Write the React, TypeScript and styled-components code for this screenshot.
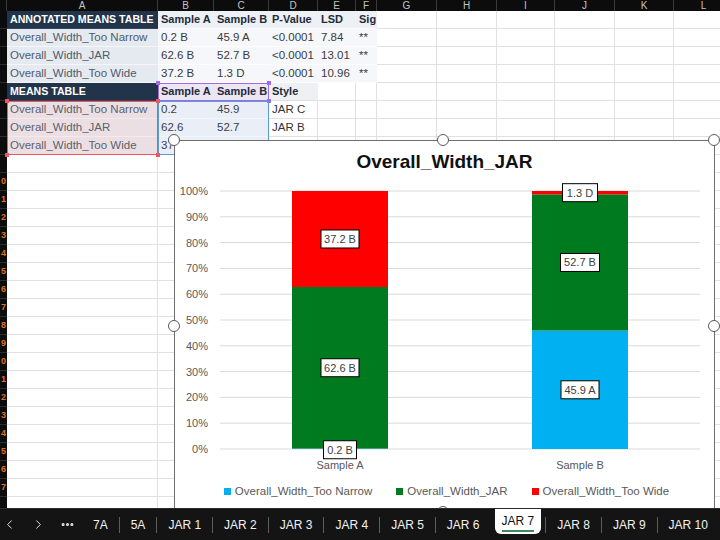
import React from 'react';
import styled, { createGlobalStyle } from 'styled-components';
import { ChevronLeft, ChevronRight, Ellipsis } from 'lucide-react';

type Kind =
  | 'plain'
  | 'title'
  | 'head'
  | 'label'
  | 'data'
  | 'pink'
  | 'purple'
  | 'blue'
  | 'gray';

type CellSpec = { t?: string; k?: Kind };

const COLS = [7, 151, 56, 55, 49, 38, 21, 60, 60, 58, 60, 59, 60];
const LETTERS = ['', 'A', 'B', 'C', 'D', 'E', 'F', 'G', 'H', 'I', 'J', 'K', 'L'];

const TOP_ROWS: CellSpec[][] = [
  [
    { t: 'ANNOTATED MEANS TABLE', k: 'title' },
    { t: 'Sample A', k: 'head' },
    { t: 'Sample B', k: 'head' },
    { t: 'P-Value', k: 'head' },
    { t: 'LSD', k: 'head' },
    { t: 'Sig', k: 'head' },
  ],
  [
    { t: 'Overall_Width_Too Narrow', k: 'label' },
    { t: '0.2 B', k: 'data' },
    { t: '45.9 A', k: 'data' },
    { t: '<0.0001', k: 'data' },
    { t: '7.84', k: 'data' },
    { t: '**', k: 'data' },
  ],
  [
    { t: 'Overall_Width_JAR', k: 'label' },
    { t: '62.6 B', k: 'data' },
    { t: '52.7 B', k: 'data' },
    { t: '<0.0001', k: 'data' },
    { t: '13.01', k: 'data' },
    { t: '**', k: 'data' },
  ],
  [
    { t: 'Overall_Width_Too Wide', k: 'label' },
    { t: '37.2 B', k: 'data' },
    { t: '1.3 D', k: 'data' },
    { t: '<0.0001', k: 'data' },
    { t: '10.96', k: 'data' },
    { t: '**', k: 'data' },
  ],
  [
    { t: 'MEANS TABLE', k: 'title' },
    { t: 'Sample A', k: 'purple' },
    { t: 'Sample B', k: 'purple' },
    { t: 'Style', k: 'gray' },
  ],
  [
    { t: 'Overall_Width_Too Narrow', k: 'pink' },
    { t: '0.2', k: 'blue' },
    { t: '45.9', k: 'blue' },
    { t: 'JAR C' },
  ],
  [
    { t: 'Overall_Width_JAR', k: 'pink' },
    { t: '62.6', k: 'blue' },
    { t: '52.7', k: 'blue' },
    { t: 'JAR B' },
  ],
  [
    { t: 'Overall_Width_Too Wide', k: 'pink' },
    { t: '37.2', k: 'blue' },
    { t: '', k: 'blue' },
    { t: '' },
  ],
];

const TOTAL_ROWS = 28;

const TABS = ['7A', '5A', 'JAR 1', 'JAR 2', 'JAR 3', 'JAR 4', 'JAR 5', 'JAR 6', 'JAR 7', 'JAR 8', 'JAR 9', 'JAR 10'];

// chart data, in percent
const SCALE = 2.58;
const ZERO_Y = 268;
const bars = [
  {
    name: 'Sample A',
    x: 117,
    segs: [
      { v: 0.2, color: '#00b0f0', label: '0.2 B', w: 33 },
      { v: 62.6, color: '#007a1e', label: '62.6 B', w: 38 },
      { v: 37.2, color: '#ff0000', label: '37.2 B', w: 38 },
    ],
  },
  {
    name: 'Sample B',
    x: 357,
    segs: [
      { v: 45.9, color: '#00b0f0', label: '45.9 A', w: 38 },
      { v: 52.8, color: '#007a1e', label: '52.7 B', w: 39 },
      { v: 1.3, color: '#ff0000', label: '1.3 D', w: 35 },
    ],
  },
];

const GlobalStyle = createGlobalStyle`
  body {
    margin: 0;
    background: #fff;
    font-family: "Liberation Sans", Arial, sans-serif;
  }
`;

const colTemplate = COLS.map((c) => `${c}px`).join(' ');

const App = () => {
  const rows: CellSpec[][] = [];
  for (let i = 0; i < TOTAL_ROWS; i++) {
    const base = TOP_ROWS[i] || [];
    const filled: CellSpec[] = [];
    for (let c = 0; c < COLS.length - 1; c++) filled.push(base[c] || {});
    rows.push(filled);
  }

  return (
    <Page>
      <GlobalStyle />
      <Sheet>
        <HeaderRow>
          {LETTERS.map((l, i) => (
            <ColHead key={i}>{l}</ColHead>
          ))}
        </HeaderRow>
        {rows.map((r, i) => (
          <Row key={i}>
            <RowHead>
              <RowNum>{i + 1 >= 10 && i + 1 < TOTAL_ROWS ? (i + 1) % 10 : ''}</RowNum>
            </RowHead>
            {r.map((cell, c) => (
              <Cell key={c} $kind={cell.k || 'plain'}>
                {cell.t}
              </Cell>
            ))}
          </Row>
        ))}

        <Selection $color="#a36be0" style={{ left: 158, top: 83, width: 111, height: 18 }}>
          <Knob $color="#a36be0" $pos="tl" />
          <Knob $color="#a36be0" $pos="tr" />
          <Knob $color="#a36be0" $pos="bl" />
          <Knob $color="#a36be0" $pos="br" />
        </Selection>
        <Selection $color="#5b9bd5" style={{ left: 158, top: 101, width: 111, height: 54 }} />
        <Selection $color="#f2545f" style={{ left: 7, top: 101, width: 151, height: 54 }}>
          <Knob $color="#f2545f" $pos="tl" />
          <Knob $color="#f2545f" $pos="tr" />
          <Knob $color="#f2545f" $pos="bl" />
          <Knob $color="#f2545f" $pos="br" />
        </Selection>

        <ChartBox>
          <ChartTitle>Overall_Width_JAR</ChartTitle>
          <svg width={538} height={298} viewBox="0 0 538 298">
            {Array.from({ length: 11 }).map((_, i) => {
              const y = ZERO_Y - i * 10 * SCALE;
              return (
                <g key={i}>
                  <line x1={45} x2={525} y1={y} y2={y} stroke="#d9d9d9" strokeWidth={1} />
                  <text
                    x={33}
                    y={y + 4}
                    textAnchor="end"
                    fontSize={11}
                    fill="#595959"
                    fontFamily="Liberation Sans, Arial, sans-serif"
                  >
                    {i * 10}%
                  </text>
                </g>
              );
            })}
            {bars.map((b) => {
              let acc = 0;
              return (
                <g key={b.name}>
                  {b.segs.map((s) => {
                    const y1 = ZERO_Y - (acc + s.v) * SCALE;
                    const h = s.v * SCALE;
                    acc += s.v;
                    return <rect key={s.label} x={b.x} y={y1} width={96} height={h} fill={s.color} />;
                  })}
                  <text
                    x={b.x + 48}
                    y={288}
                    textAnchor="middle"
                    fontSize={11}
                    fill="#595959"
                    fontFamily="Liberation Sans, Arial, sans-serif"
                  >
                    {b.name}
                  </text>
                </g>
              );
            })}
            {bars.map((b) => {
              let acc = 0;
              return b.segs.map((s) => {
                const cy = ZERO_Y - (acc + s.v / 2) * SCALE + (s.v < 1 ? 1 : 0);
                acc += s.v;
                return (
                  <g key={b.name + s.label}>
                    <rect x={b.x + 48 - s.w / 2} y={cy - 9} width={s.w} height={18} fill="#fff" stroke="#000" strokeWidth={1} />
                    <text
                      x={b.x + 48}
                      y={cy + 4}
                      textAnchor="middle"
                      fontSize={11}
                      fill="#404040"
                      fontFamily="Liberation Sans, Arial, sans-serif"
                    >
                      {s.label}
                    </text>
                  </g>
                );
              });
            })}
          </svg>
          <Legend>
            <LegendItem>
              <Swatch $color="#00b0f0" />
              Overall_Width_Too Narrow
            </LegendItem>
            <LegendItem>
              <Swatch $color="#007a1e" />
              Overall_Width_JAR
            </LegendItem>
            <LegendItem>
              <Swatch $color="#ff0000" />
              Overall_Width_Too Wide
            </LegendItem>
          </Legend>
        </ChartBox>

        <Handle style={{ left: 174, top: 140 }} />
        <Handle style={{ left: 443, top: 140 }} />
        <Handle style={{ left: 714, top: 140 }} />
        <Handle style={{ left: 174, top: 326 }} />
        <Handle style={{ left: 714, top: 326 }} />
        <Handle style={{ left: 443, top: 512 }} />
      </Sheet>

      <TabBar>
        <NavButton>
          <ChevronLeft size={15} strokeWidth={1.5} />
        </NavButton>
        <NavButton>
          <ChevronRight size={15} strokeWidth={1.5} />
        </NavButton>
        <NavButton>
          <Ellipsis size={15} strokeWidth={3} />
        </NavButton>
        <Tabs>
          {TABS.map((t, i) => (
            <Tab key={t} $active={t === 'JAR 7'} $first={i === 0}>
              {t}
            </Tab>
          ))}
        </Tabs>
      </TabBar>
    </Page>
  );
};

const Page = styled.div`
  width: 720px;
  height: 540px;
  overflow: hidden;
  display: flex;
  flex-direction: column;
`;

const Sheet = styled.div`
  position: relative;
  height: 508px;
  overflow: hidden;
  flex-shrink: 0;
`;

const HeaderRow = styled.div`
  display: grid;
  grid-template-columns: ${colTemplate};
  height: 11px;
  background: #0c0c0c;
`;

const ColHead = styled.div`
  color: #c4c4c4;
  font-size: 10px;
  line-height: 11px;
  text-align: center;
  overflow: hidden;
  border-right: 1px solid #3a3a3a;
`;

const Row = styled.div`
  display: grid;
  grid-template-columns: ${colTemplate};
  height: 18px;
`;

const RowHead = styled.div`
  background: #0c0c0c;
  display: flex;
  justify-content: flex-end;
  border-bottom: 1px solid #2c2c2c;
`;

const RowNum = styled.span`
  color: #d9702a;
  font-size: 9px;
  font-weight: bold;
  line-height: 17px;
  white-space: nowrap;
  margin-right: 1px;
`;

const kindStyles: Record<Kind, string> = {
  plain: 'background:#fff;color:#333;border-right-color:#e1e1e1;border-bottom-color:#e1e1e1;',
  title:
    'background:#223449;color:#fff;font-weight:bold;font-size:10.6px;border-right-color:#223449;border-bottom-color:#35465a;',
  head: 'background:#edf0f4;color:#1f2b3a;font-weight:bold;font-size:11px;border-right-color:#edf0f4;border-bottom-color:#fafbfc;',
  label: 'background:#e5eaf1;color:#4f5b6a;border-right-color:#e5eaf1;border-bottom-color:#f4f6f9;',
  data: 'background:#f5f7fa;color:#3b3b3b;border-right-color:#f5f7fa;border-bottom-color:#fdfdfe;',
  pink: 'background:#ecdfe4;color:#5b5f6b;border-right-color:#ecdfe4;border-bottom-color:#f4eaee;',
  purple: 'background:#ebe5f4;color:#262a3a;font-weight:bold;font-size:11px;border-right-color:#ebe5f4;border-bottom-color:#ebe5f4;',
  blue: 'background:#e9eef7;color:#3b3f4a;border-right-color:#e9eef7;border-bottom-color:#f2f5fb;',
  gray: 'background:#eef0f3;color:#262a33;font-weight:bold;font-size:11px;border-right-color:#eef0f3;border-bottom-color:#e1e1e1;',
};

const Cell = styled.div<{ $kind: Kind }>`
  box-sizing: border-box;
  padding: 0 3px;
  font-size: 11.5px;
  line-height: 17px;
  white-space: nowrap;
  overflow: hidden;
  border-right: 1px solid;
  border-bottom: 1px solid;
  ${({ $kind }) => kindStyles[$kind]}
`;

const Selection = styled.div<{ $color: string }>`
  position: absolute;
  box-sizing: border-box;
  border: 1.5px solid ${({ $color }) => $color};
  pointer-events: none;
`;

const Knob = styled.span<{ $color: string; $pos: 'tl' | 'tr' | 'bl' | 'br' }>`
  position: absolute;
  width: 4px;
  height: 4px;
  background: ${({ $color }) => $color};
  ${({ $pos }) => ($pos[0] === 't' ? 'top: -3px;' : 'bottom: -3px;')}
  ${({ $pos }) => ($pos[1] === 'l' ? 'left: -3px;' : 'right: -3px;')}
`;

const ChartBox = styled.div`
  position: absolute;
  left: 174px;
  top: 140px;
  width: 541px;
  height: 373px;
  box-sizing: border-box;
  border: 1px solid #6e6e6e;
  background: #fff;
  display: flex;
  flex-direction: column;
`;

const ChartTitle = styled.div`
  height: 40px;
  padding-top: 2px;
  box-sizing: border-box;
  text-align: center;
  font-size: 19px;
  font-weight: bold;
  line-height: 38px;
  color: #111;
`;

const Legend = styled.div`
  height: 24px;
  display: flex;
  justify-content: center;
  align-items: center;
  gap: 24px;
  padding-left: 4px;
`;

const LegendItem = styled.div`
  display: flex;
  align-items: center;
  gap: 4px;
  font-size: 11.5px;
  color: #595959;
`;

const Swatch = styled.span<{ $color: string }>`
  width: 7px;
  height: 7px;
  background: ${({ $color }) => $color};
`;

const Handle = styled.div`
  position: absolute;
  width: 10px;
  height: 10px;
  margin: -6px 0 0 -6px;
  border-radius: 50%;
  border: 1.5px solid #5a5a5a;
  background: #fff;
`;

const TabBar = styled.div`
  height: 32px;
  background: #141414;
  border-top: 1px solid #2a2a2a;
  box-sizing: border-box;
  display: flex;
  align-items: center;
  color: #fff;
  font-size: 12px;
`;

const NavButton = styled.div`
  flex-shrink: 0;
  width: 18px;
  margin-right: 11px;
  display: flex;
  justify-content: center;
  color: #e8e8e8;
`;

const Tabs = styled.div`
  display: flex;
  align-items: center;
  height: 100%;
  margin-left: -5px;
`;

const Tab = styled.div<{ $active: boolean; $first: boolean }>`
  position: relative;
  flex-shrink: 0;
  padding: 0 ${({ $active }) => ($active ? '7px' : '11px')};
  height: ${({ $active }) => ($active ? '25px' : '16px')};
  line-height: ${({ $active }) => ($active ? '25px' : '16px')};
  align-self: ${({ $active }) => ($active ? 'flex-start' : 'center')};
  border-left: ${({ $first, $active }) => ($first || $active ? 'none' : '1px solid #5c5c5c')};
  background: ${({ $active }) => ($active ? '#fff' : 'transparent')};
  color: ${({ $active }) => ($active ? '#111' : '#f2f2f2')};
  border-radius: ${({ $active }) => ($active ? '0 0 6px 6px' : '0')};
  margin: ${({ $active }) => ($active ? '0 4px' : '0')};
  white-space: nowrap;
  &::after {
    content: '';
    display: ${({ $active }) => ($active ? 'block' : 'none')};
    position: absolute;
    left: 7px;
    right: 7px;
    bottom: 2px;
    height: 2px;
    background: #3f8a5f;
  }
`;

export default App;
